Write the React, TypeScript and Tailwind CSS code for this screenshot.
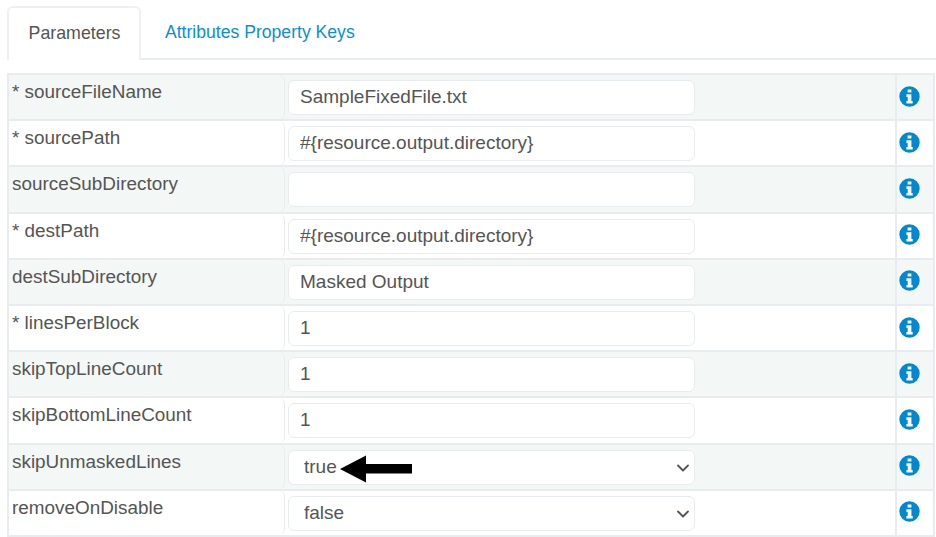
import React from 'react';
import { ChevronDown } from 'lucide-react';

type Param = {
  label: string;
  value: string;
  select?: boolean;
};

const params: Param[] = [
  { label: '* sourceFileName', value: 'SampleFixedFile.txt' },
  { label: '* sourcePath', value: '#{resource.output.directory}' },
  { label: 'sourceSubDirectory', value: '' },
  { label: '* destPath', value: '#{resource.output.directory}' },
  { label: 'destSubDirectory', value: 'Masked Output' },
  { label: '* linesPerBlock', value: '1' },
  { label: 'skipTopLineCount', value: '1' },
  { label: 'skipBottomLineCount', value: '1' },
  { label: 'skipUnmaskedLines', value: 'true', select: true },
  { label: 'removeOnDisable', value: 'false', select: true },
];

const InfoIcon = () => (
  <svg width="21" height="21" viewBox="0 0 21 21" className="-mt-[2px]">
    <path
      fillRule="evenodd"
      fill="#0288d1"
      d="M10.5 0.3a10.2 10.2 0 1 0 0 20.4a10.2 10.2 0 1 0 0-20.4zM8.6 3.6h3.8v3H8.6zM7.4 8.3h5v6.6h1.3v2.6H7.4v-2.6h1.3v-4H7.4z"
    />
  </svg>
);

const Row: React.FC<{ param: Param; odd: boolean }> = ({ param, odd }) => (
  <div className={`grid h-[46.2px] grid-cols-[276px_612px_1fr] border-b-2 border-[#e9ecef] ${odd ? 'bg-[#f3f7f5]' : 'bg-white'}`}>
    <div className="rounded-md border-r border-[#e9ecef] pl-[3px] pt-[5px] text-[18.9px] leading-[24px] text-[#555]">
      {param.label}
    </div>
    <div className="border-r-2 border-[#e9ecef] pl-[3px] pt-[5px]">
      {param.select ? (
        <div className="relative w-[407px]">
          <select
            defaultValue={param.value}
            className="h-[35px] w-full appearance-none rounded-md border border-[#e9ecef] bg-white pl-[15px] text-[19px] text-[#555] outline-none"
          >
            <option value="true">true</option>
            <option value="false">false</option>
          </select>
          <ChevronDown className="pointer-events-none absolute right-[2px] top-[8px] h-5 w-5 text-[#555]" strokeWidth={2.2} />
          {param.value === 'true' && (
            <svg className="absolute left-[52px] top-[5px]" width="73" height="28" viewBox="0 0 73 28">
              <path d="M0 14 L26 0.5 V9 H72 V18.5 H26 V27.5 Z" fill="#000" />
            </svg>
          )}
        </div>
      ) : (
        <input
          readOnly
          value={param.value}
          className="h-[35px] w-[407px] rounded-md border border-[#e9ecef] bg-white pb-[1px] pl-[11px] text-[19px] text-[#555] outline-none"
        />
      )}
    </div>
    <div className="flex items-center justify-center pr-[11px]">
      <InfoIcon />
    </div>
  </div>
);

export default function App() {
  return (
    <div className="h-[537px] w-[936px] overflow-hidden bg-white pl-[7px] pt-[6px] font-['Liberation_Sans',Arial,sans-serif]">
      <div className="flex h-[54px] border-b-2 border-[#e9ecef]">
        <div className="-mb-[2px] flex w-[134px] items-center justify-center rounded-t-md border-2 border-b-0 border-[#eef0f2] bg-white pb-[1px] pl-[1px] text-[17.8px] text-[#555]">
          Parameters
        </div>
        <div className="flex items-center pl-[24px] text-[17.6px] text-[#0a8ed6]">Attributes Property Keys</div>
      </div>
      <div className="mt-[13px] w-[928px] border-x-2 border-t-2 border-[#e9ecef]">
        {params.map((param, i) => (
          <Row key={param.label} param={param} odd={i % 2 === 0} />
        ))}
      </div>
    </div>
  );
}
